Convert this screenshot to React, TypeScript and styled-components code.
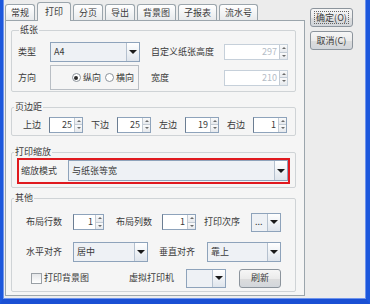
import styled, { createGlobalStyle } from "styled-components";

const GlobalStyle = createGlobalStyle`
  html, body {
    margin: 0;
    padding: 0;
    background: #ececec;
  }
  body {
    font-family: "Noto Sans CJK SC", "Noto Sans", sans-serif;
    font-size: 9px;
    line-height: 12px;
    color: #3a3a3a;
  }
  * {
    box-sizing: border-box;
  }
`;

const Window = styled.div`
  width: 370px;
  height: 304px;
  display: flex;
  background: #ececec;
  border-left: 3px solid #1c57dc;
  border-right: 4px solid #1c57dc;
  border-bottom: 5px solid #1a50d4;
  box-shadow: inset 1px 0 0 #6f94ec, inset -1px -1px 0 #6f94ec;
`;

const TabArea = styled.div`
  width: 302px;
  padding: 0 0 3px 2px;
  display: flex;
  flex-direction: column;
`;

const TabStrip = styled.div`
  height: 20px;
  display: flex;
  align-items: flex-end;
  gap: 2px;
`;

const Tab = styled.div<{ $active?: boolean }>`
  height: ${p => (p.$active ? 19 : 16)}px;
  padding: 0 ${p => (p.$active ? 7 : 5)}px;
  margin-bottom: ${p => (p.$active ? -1 : 0)}px;
  display: flex;
  align-items: center;
  border: 1px solid #9ba5ac;
  border-bottom: none;
  border-radius: 3px 3px 0 0;
  background: ${p => (p.$active ? "#f5f5f5" : "linear-gradient(#ffffff, #e8eaec)")};
  position: relative;
  z-index: ${p => (p.$active ? 1 : 0)};
  white-space: nowrap;
`;

const Panel = styled.div`
  flex: 1;
  border: 1px solid #9ba5ac;
  background: #f5f5f5;
  padding: 3px 8px 0 5px;
`;

const Group = styled.fieldset<{ $mt?: number }>`
  margin: ${p => p.$mt ?? 0}px 0 0;
  padding: 0;
  min-width: 0;
  border: 1px solid #cfd3d6;
  border-radius: 2px;
`;

const Legend = styled.legend<{ $indent?: number }>`
  margin-left: ${p => p.$indent ?? 2}px;
  padding: 0 1px;
  line-height: 12px;
`;

const GroupBody = styled.div<{ $pt: number; $pb: number }>`
  padding: ${p => p.$pt}px 0 ${p => p.$pb}px;
  display: flex;
  flex-direction: column;
`;

const Row = styled.div<{ $h: number; $pl: number; $mt?: number }>`
  height: ${p => p.$h}px;
  margin-top: ${p => p.$mt ?? 0}px;
  padding-left: ${p => p.$pl}px;
  display: flex;
  align-items: center;
`;

const Label = styled.span<{ $w: number }>`
  width: ${p => p.$w}px;
  flex: none;
  white-space: nowrap;
`;

const Gap = styled.span<{ $w: number }>`
  width: ${p => p.$w}px;
  flex: none;
`;

const ComboBox = styled.div<{ $w: number; $h: number }>`
  width: ${p => p.$w}px;
  height: ${p => p.$h}px;
  flex: none;
  display: flex;
  border: 1px solid #8ea3bb;
  background: #eef1f5;
`;

const ComboText = styled.span`
  flex: 1;
  padding-left: 3px;
  display: flex;
  align-items: center;
  overflow: hidden;
  white-space: nowrap;
`;

const ComboArrow = styled.span`
  width: 13px;
  flex: none;
  display: flex;
  align-items: center;
  justify-content: center;
  border-left: 1px solid #b5c1cf;
  background: linear-gradient(#ffffff, #dfe5ec);
`;

const Caret = styled.span`
  width: 0;
  height: 0;
  border-left: 4px solid transparent;
  border-right: 4px solid transparent;
  border-top: 4px solid #1a1a1a;
`;

const SpinBox = styled.div<{ $w: number; $disabled?: boolean }>`
  width: ${p => p.$w}px;
  height: 16px;
  flex: none;
  display: flex;
  border: 1px solid ${p => (p.$disabled ? "#c6d0da" : "#8ea3bb")};
  border-left-color: ${p => (p.$disabled ? "#c6d0da" : "#6b7d92")};
  background: #ffffff;
  color: ${p => (p.$disabled ? "#b4bcc6" : "#3a3a3a")};
`;

const SpinText = styled.span`
  flex: 1;
  padding-right: 2px;
  display: flex;
  align-items: center;
  justify-content: flex-end;
`;

const SpinButtons = styled.span`
  width: 8px;
  flex: none;
  display: flex;
  flex-direction: column;
  border-left: 1px solid #c3cbd4;
`;

const SpinHalf = styled.span<{ $down?: boolean }>`
  flex: 1;
  display: flex;
  align-items: center;
  justify-content: center;
  background: linear-gradient(#fafafa, #e6e9ed);
  border-top: ${p => (p.$down ? "1px solid #c3cbd4" : "none")};
`;

const TinyArrow = styled.span<{ $down?: boolean }>`
  width: 0;
  height: 0;
  border-left: 2px solid transparent;
  border-right: 2px solid transparent;
  ${p => (p.$down ? "border-top: 2px solid #6a6a6a;" : "border-bottom: 2px solid #6a6a6a;")}
`;

const RadioBox = styled.div`
  width: 89px;
  height: 25px;
  flex: none;
  display: flex;
  align-items: center;
  justify-content: flex-end;
  gap: 4px;
  padding-right: 4px;
  border: 1px solid #b9bec4;
`;

const RadioItem = styled.span`
  display: flex;
  align-items: center;
  gap: 2px;
`;

const RadioCircle = styled.span<{ $checked?: boolean }>`
  width: 9px;
  height: 9px;
  border-radius: 50%;
  border: 1px solid #8c939b;
  background: #ffffff;
  display: flex;
  align-items: center;
  justify-content: center;
  &::after {
    content: "";
    width: 4px;
    height: 4px;
    border-radius: 50%;
    background: ${p => (p.$checked ? "#2d2d2d" : "transparent")};
  }
`;

const Highlight = styled.div`
  height: 26px;
  margin: 0 5px 0 5px;
  padding: 0 0 1px 2px;
  display: flex;
  align-items: center;
  border: 2px solid #e0191f;
`;

const CheckItem = styled.span<{ $w: number }>`
  width: ${p => p.$w}px;
  flex: none;
  display: flex;
  align-items: center;
  gap: 2px;
`;

const CheckSquare = styled.span`
  width: 11px;
  height: 11px;
  border: 1px solid #9aa0a6;
  background: linear-gradient(#e4e6e8, #ffffff);
`;

const Button = styled.div<{ $w: number }>`
  width: ${p => p.$w}px;
  height: 19px;
  flex: none;
  display: flex;
  align-items: center;
  justify-content: center;
  border: 1px solid #8c949c;
  border-radius: 3px;
  background: linear-gradient(#f6f6f6, #ebebeb 50%, #dddddd 51%, #d2d6db);
  white-space: nowrap;
`;

const FocusText = styled.span`
  outline: 1px dotted #666;
  outline-offset: 0;
  padding: 0 1px;
  line-height: 11px;
`;

const Side = styled.div`
  display: flex;
  flex-direction: column;
  gap: 4px;
  padding: 8px 0 0 5px;
`;

type ComboProps = { value?: string; width: number; height?: number };
const Combo = ({ value, width, height = 20 }: ComboProps) => (
  <ComboBox $w={width} $h={height}>
    <ComboText>{value}</ComboText>
    <ComboArrow>
      <Caret />
    </ComboArrow>
  </ComboBox>
);

type SpinnerProps = { value: string; width: number; disabled?: boolean };
const Spinner = ({ value, width, disabled }: SpinnerProps) => (
  <SpinBox $w={width} $disabled={disabled}>
    <SpinText>{value}</SpinText>
    <SpinButtons>
      <SpinHalf>
        <TinyArrow />
      </SpinHalf>
      <SpinHalf $down>
        <TinyArrow $down />
      </SpinHalf>
    </SpinButtons>
  </SpinBox>
);

const tabs = ["常规", "打印", "分页", "导出", "背景图", "子报表", "流水号"];

const margins = [
  { label: "上边", value: "25" },
  { label: "下边", value: "25" },
  { label: "左边", value: "19" },
  { label: "右边", value: "1" },
];

export default function App() {
  return (
    <>
      <GlobalStyle />
      <Window>
        <TabArea>
          <TabStrip>
            {tabs.map(t => (
              <Tab key={t} $active={t === "打印"}>
                {t}
              </Tab>
            ))}
          </TabStrip>
          <Panel>
            <Group>
              <Legend $indent={7}>纸张</Legend>
              <GroupBody $pt={6} $pb={1}>
                <Row $h={20} $pl={6}>
                  <Label $w={32}>类型</Label>
                  <Combo value="A4" width={90} />
                  <Gap $w={11} />
                  <Label $w={73}>自定义纸张高度</Label>
                  <Spinner value="297" width={64} disabled />
                </Row>
                <Row $h={25} $pl={6} $mt={3}>
                  <Label $w={32}>方向</Label>
                  <RadioBox>
                    <RadioItem>
                      <RadioCircle $checked />
                      纵向
                    </RadioItem>
                    <RadioItem>
                      <RadioCircle />
                      横向
                    </RadioItem>
                  </RadioBox>
                  <Gap $w={12} />
                  <Label $w={73}>宽度</Label>
                  <Spinner value="210" width={64} disabled />
                </Row>
              </GroupBody>
            </Group>

            <Group $mt={9}>
              <Legend>页边距</Legend>
              <GroupBody $pt={3} $pb={2}>
                <Row $h={17} $pl={11}>
                  {margins.map((m, i) => (
                    <Row key={m.label} $h={17} $pl={i === 0 ? 0 : 8}>
                      <Label $w={26}>{m.label}</Label>
                      <Spinner value={m.value} width={34} />
                    </Row>
                  ))}
                </Row>
              </GroupBody>
            </Group>

            <Group $mt={10}>
              <Legend>打印缩放</Legend>
              <GroupBody $pt={0} $pb={3}>
                <Highlight>
                  <Label $w={47}>缩放模式</Label>
                  <Combo value="与纸张等宽" width={220} height={21} />
                </Highlight>
              </GroupBody>
            </Group>

            <Group $mt={4}>
              <Legend>其他</Legend>
              <GroupBody $pt={8} $pb={3}>
                <Row $h={20} $pl={14}>
                  <Label $w={47}>布局行数</Label>
                  <Spinner value="1" width={31} />
                  <Gap $w={12} />
                  <Label $w={46}>布局列数</Label>
                  <Spinner value="1" width={34} />
                  <Gap $w={8} />
                  <Label $w={47}>打印次序</Label>
                  <Combo value="..." width={30} height={19} />
                </Row>
                <Row $h={20} $pl={14} $mt={10}>
                  <Label $w={47}>水平对齐</Label>
                  <Combo value="居中" width={75} />
                  <Gap $w={11} />
                  <Label $w={48}>垂直对齐</Label>
                  <Combo value="靠上" width={74} />
                </Row>
                <Row $h={20} $pl={19} $mt={6}>
                  <CheckItem $w={98}>
                    <CheckSquare />
                    打印背景图
                  </CheckItem>
                  <Label $w={57}>虚拟打印机</Label>
                  <Combo width={40} height={19} />
                  <Gap $w={13} />
                  <Button $w={42}>刷新</Button>
                </Row>
              </GroupBody>
            </Group>
          </Panel>
        </TabArea>
        <Side>
          <Button $w={43}>
            <FocusText>确定(O)</FocusText>
          </Button>
          <Button $w={43}>取消(C)</Button>
        </Side>
      </Window>
    </>
  );
}
